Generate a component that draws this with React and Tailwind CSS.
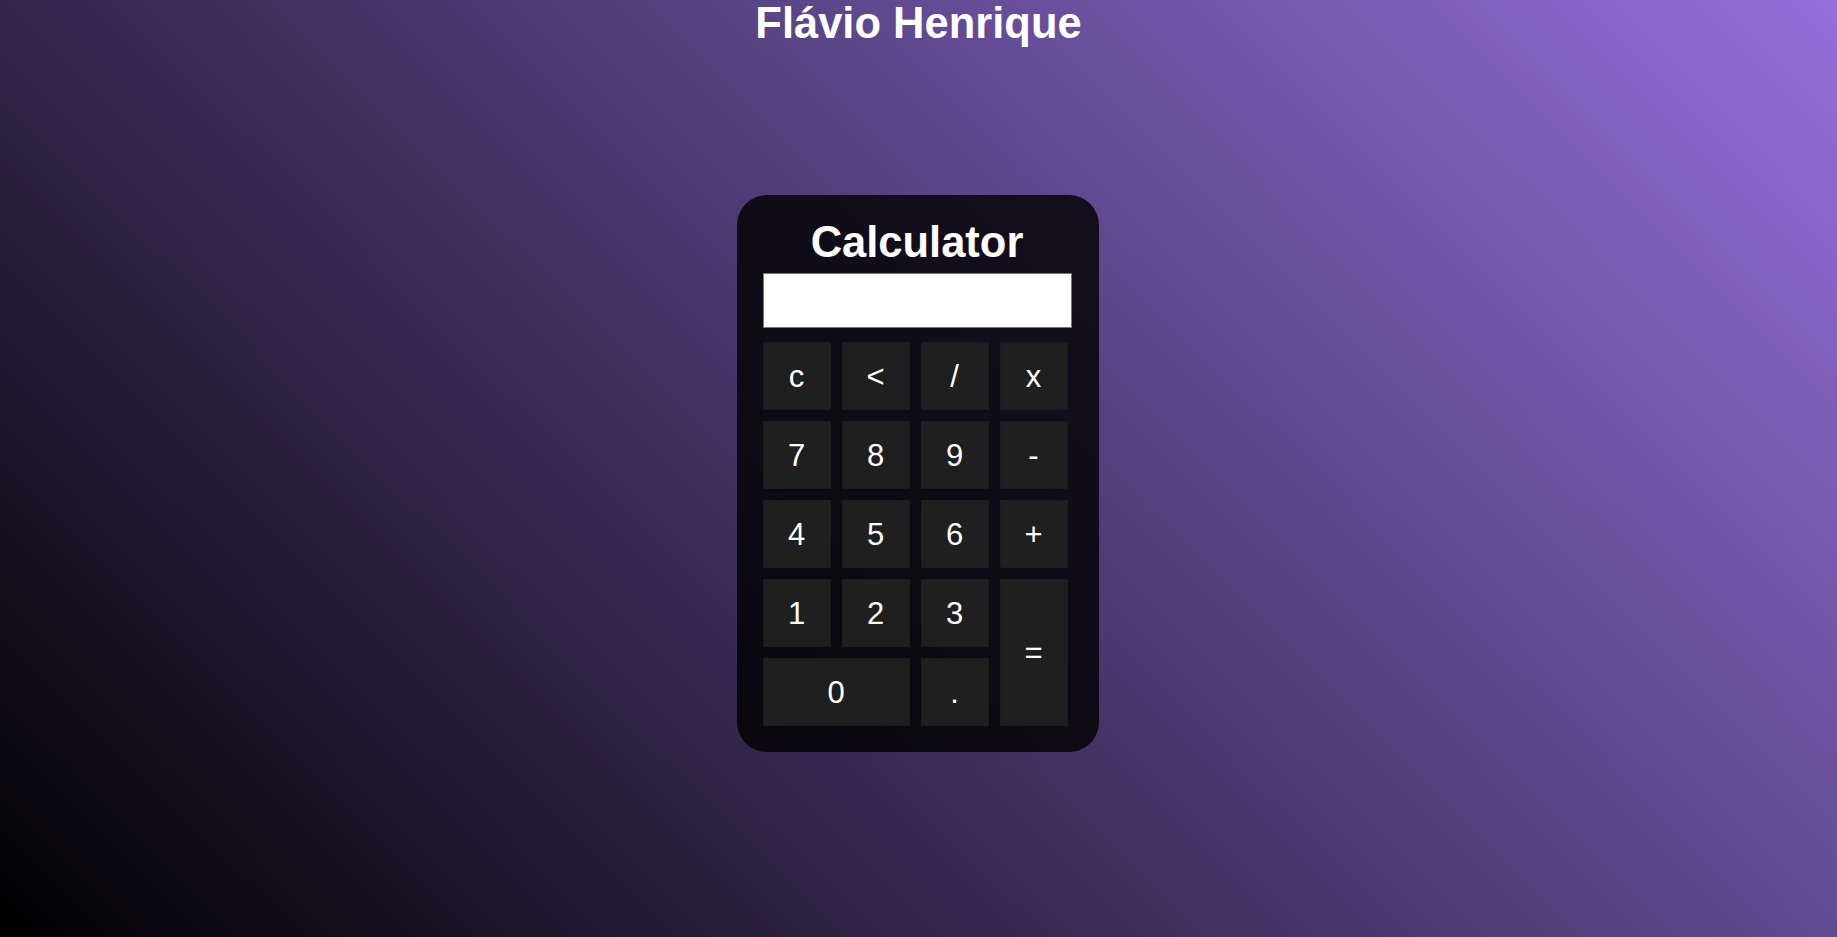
import React, { useState } from "react";

const btn =
  "flex items-center justify-center bg-[#1f1f1f] border border-[#1b1b1b] text-white text-[31px] leading-none cursor-pointer";

export default function App() {
  const [val, setVal] = useState("");
  const press = (k) => {
    if (k === "c") return setVal("");
    if (k === "<") return setVal((v) => v.slice(0, -1));
    if (k === "=") {
      try {
        // eslint-disable-next-line no-new-func
        const r = Function("return (" + val.replace(/x/g, "*") + ")")();
        setVal(String(r));
      } catch (e) {
        setVal("Erro");
      }
      return;
    }
    setVal((v) => v + k);
  };
  const keys = ["c", "<", "/", "x", "7", "8", "9", "-", "4", "5", "6", "+"];
  return (
    <div
      className="min-h-screen w-full flex flex-col items-center bg-[linear-gradient(45deg,#000000,#9370db)]"
      style={{ fontFamily: '"Liberation Sans", Arial, sans-serif' }}
    >
      <h1 className="m-0 text-white font-bold text-[43.5px] leading-[46px]">
        Flávio Henrique
      </h1>
      <div className="mt-[149px] -translate-x-[1px] w-[362px] rounded-[30px] bg-black/80 pt-[24px] pb-[26px] pl-[26px] pr-[27px] flex flex-col">
        <h2 className="m-0 text-white font-bold text-[43.5px] leading-[46px] text-center">
          Calculator
        </h2>
        <input
          readOnly
          value={val}
          className="mt-[8px] h-[55px] w-[309px] bg-white border border-[#767676] text-black text-[30px] px-2 text-right outline-none"
        />
        <div className="mt-[14px] w-[305px] grid grid-cols-4 auto-rows-[68px] gap-[11px]">
          {keys.map((k) => (
            <button key={k} className={btn} onClick={() => press(k)}>
              {k}
            </button>
          ))}
          <button className={btn} onClick={() => press("1")}>1</button>
          <button className={btn} onClick={() => press("2")}>2</button>
          <button className={btn} onClick={() => press("3")}>3</button>
          <button className={btn + " row-span-2"} onClick={() => press("=")}>=</button>
          <button className={btn + " col-span-2"} onClick={() => press("0")}>0</button>
          <button className={btn} onClick={() => press(".")}>.</button>
        </div>
      </div>
    </div>
  );
}
